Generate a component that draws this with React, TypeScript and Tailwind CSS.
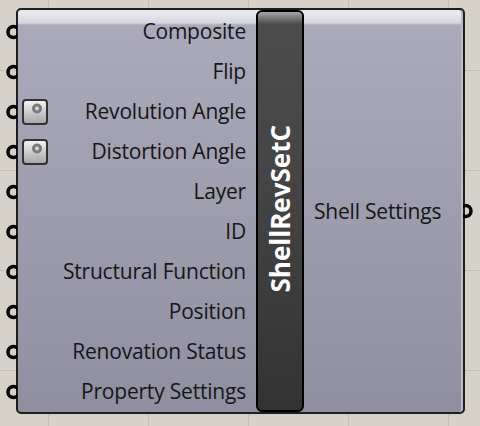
type InputRow = {
  name: string;
  hasData?: boolean;
};

const inputs: InputRow[] = [
  { name: "Composite" },
  { name: "Flip" },
  { name: "Revolution Angle", hasData: true },
  { name: "Distortion Angle", hasData: true },
  { name: "Layer" },
  { name: "ID" },
  { name: "Structural Function" },
  { name: "Position" },
  { name: "Renovation Status" },
  { name: "Property Settings" },
];

function InputGrip() {
  return (
    <svg
      width="12"
      height="18"
      viewBox="0 0 12 18"
      className="absolute left-[-13px] top-[11px]"
    >
      <circle cx="8.5" cy="9" r="5.5" fill="none" stroke="#000" strokeWidth="3.5" />
    </svg>
  );
}

function OutputGrip() {
  return (
    <svg
      width="12"
      height="18"
      viewBox="0 0 12 18"
      className="absolute right-[-12px] top-1/2 -translate-y-1/2"
    >
      <circle cx="2.5" cy="9" r="5.5" fill="none" stroke="#000" strokeWidth="3.5" />
    </svg>
  );
}

function DataIcon() {
  return (
    <div className="absolute left-[4px] top-[7px] h-[26px] w-[26px] rounded-[4px] border-2 border-[#333] bg-[linear-gradient(to_bottom,#f4f4f4,#c4c4c4_60%,#a9a9a9)]">
      <svg width="22" height="22" viewBox="0 0 22 22" className="block">
        <circle cx="13" cy="7.5" r="5" fill="#7a7a7a" />
        <circle cx="13" cy="7.5" r="2" fill="#d8d8d8" />
      </svg>
    </div>
  );
}

function App() {
  return (
    <div className="h-[426px] w-[480px] overflow-hidden bg-[#d6d2ca] bg-[linear-gradient(to_right,#c3bfb7_1px,transparent_1px),linear-gradient(to_bottom,#c3bfb7_1px,transparent_1px)] bg-[size:100px_100px] bg-[position:48px_70px] pl-[16px] pt-[8px] font-['Open_Sans',sans-serif]">
      <div className="relative flex h-[406px] w-[449px] rounded-[5px] border-2 border-[#1e1e1e] bg-[linear-gradient(to_bottom,#ececf0_0px,#d6d6de_13px,#aaaaba_15px,#8f8f9f_100%)] shadow-[inset_-2px_0_0_#bdbdca]">
        <div className="flex w-[238px] flex-col pt-[2px]">
          {inputs.map((input) => (
            <div
              key={input.name}
              className="relative flex h-[40px] items-center justify-end pr-[10px] text-[21px] tracking-[-0.2px] text-[#161616]"
            >
              <InputGrip />
              {input.hasData && <DataIcon />}
              <span>{input.name}</span>
            </div>
          ))}
        </div>
        <div className="flex w-[48px] items-center justify-center rounded-[6px] border-2 border-black bg-[linear-gradient(to_bottom,#a6a6a6_0px,#4c4c4c_12px,#454545_40%,#333333_100%)]">
          <span className="mt-[-4px] rotate-180 text-[26px] font-bold leading-none text-white [writing-mode:vertical-rl]">
            ShellRevSetC
          </span>
        </div>
        <div className="relative flex flex-1 items-center pl-[10px] pt-[2px] text-[21px] tracking-[-0.2px] text-[#161616]">
          <span>Shell Settings</span>
          <OutputGrip />
        </div>
      </div>
    </div>
  );
}

export default App;
